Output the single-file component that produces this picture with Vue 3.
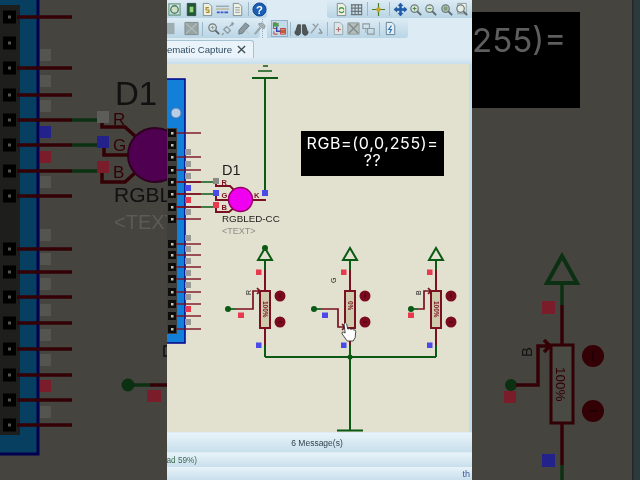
<script setup>
const P = (d, f = 'none', s = 'none', w = 1) => ({ d, f, s, w })
const ring = 'M3 7a4 4 0 1 0 8 0a4 4 0 1 0-8 0'
const doc = P('M3.5 1.5h6l3 3v10h-9z', '#eef0e4', '#7d8c90', 1)
const mag = (c, extra = []) => [P(ring, c, '#6f7d80', 1.3), P('M10 10l4 4', 'none', '#5f6a6c', 2), ...extra]
const grayTool = '#8f9ea3'

const iconsA = [
  { first: true, p: [P('M2 2h12v12h-12z', 'none', '#6f9a80', 1.2), P('M4 8a4 4 0 1 0 8 0a4 4 0 1 0-8 0', '#cfe0c8', '#4d7d5c', 1.4)] },
  { p: [P('M3.5 1.5h9v13h-9z', '#1c5a35', '#38474c', 1), P('M6 5h4v6h-4z', '#9ed07c')] },
  { p: [doc, P('M9.5 6h-3v2.5h3v2.5h-3', 'none', '#a58a22', 1.2)] },
  { p: [P('M1 4.5h14', 'none', '#8c9aa0', 1.2), P('M1 7.5h14', 'none', '#b8a070', 1), P('M2 11h3M6 11h3M10 11h4', 'none', '#3d55c8', 2)] },
  { p: [doc, P('M5.5 6h5M5.5 8.5h5M5.5 11h5', 'none', '#8c9aa0', 1)] },
  { sep: true },
  { p: [P('M1 8a7 7 0 1 0 14 0a7 7 0 1 0-14 0', '#1a5fb4', '#0f3f86', 1)], t: '?' }
]
const iconsB = [
  { p: [doc, P('M5.5 8a2.6 2.6 0 0 1 5 0M10.5 9.5a2.6 2.6 0 0 1-5 0', 'none', '#3c9a3c', 1.4)] },
  { p: [P('M2 3h12M2 6.5h12M2 10h12M2 13.5h12M3 2v12M6.5 2v12M10 2v12M13.5 2v12', 'none', '#6a7478', 1.2)] },
  { sep: true },
  { p: [P('M8 1v14M1 8h14', 'none', '#4a7d2e', 1.3), P('M5.5 8a2.5 2.5 0 1 0 5 0a2.5 2.5 0 1 0-5 0', '#c9a326')] },
  { sep: true },
  { p: [P('M8 1l2.6 3h-1.6v3h3v-1.6l3 2.6l-3 2.6v-1.6h-3v3h1.6l-2.6 3l-2.6-3h1.6v-3h-3v1.6l-3-2.6l3-2.6v1.6h3v-3h-1.6z', '#1a5db0', '#123f80', .5)] },
  { p: mag('#dbe8d8', [P('M5 7h4M7 5v4', 'none', '#4a7d4a', 1)]) },
  { p: mag('#dbe8d8', [P('M5 7h4', 'none', '#4a7d4a', 1)]) },
  { p: mag('#b8c8b8', [P('M5 5h4v4h-4z', '#7f9a7f')]) },
  { p: [P('M4 1.5h9v11h-9z', '#f4f6f0', '#8a9698', 1), ...mag('#e8eee6')] }
]
const iconsC = [
  { first: true, gray: true, p: [P('M-2 2h10v12h-10z', '#9eaeb2')] },
  { p: [P('M1 1.5h14v13h-14z', '#98a4a4', '#7f8c8e', 1), P('M2 2.5l12 11M14 2.5l-12 11', 'none', '#b4bebe', 1.2)] },
  { sep: true },
  { p: mag('#d8e2e2', [P('M5 7h4M7 5v4', 'none', grayTool, 1)]) },
  { p: [P('M3 9l3-3l4 4l-3 3zM9 6l4-4M3 13l-2 2M11 3h3M12 1v4', 'none', grayTool, 1.5)] },
  { p: [P('M2 10l7-8l4 3l-7 8l-4 1z', '#8a9aa0', '#6d7b80', 1), P('M9 10l4 4', 'none', '#c6d0d2', 2)] },
  { p: [P('M3 14l6-7', 'none', '#9aa6aa', 2.4), P('M7 3l4-1l3 3l-1 3l-3-1l-2-2z', '#a8b2b4', '#8c989c', 1)] }
]
const iconsD = [
  { p: [P('M7 5l-2.5-3h-3v6h3M9 8h5.5v6h-5.5zM2 11v3h4', 'none', '#c03a3a', 1), P('M2 2h5v4h-5z', '#4aa04a'), P('M5 6v5h6', 'none', '#3048b0', 1.5), P('M9 9h5v4h-5z', '#c85a3a')], active: true },
  { sep: true },
  { p: [P('M2 10a3 3 0 1 0 5 2v-8h-3zM9 12a3 3 0 1 0 5-2l-2-6h-3z', '#4f5658', '#3a4042', .8)] },
  { p: [P('M2 13l8-10', 'none', '#98a6a8', 1.6), P('M4 3l3 3M11 8l3 5M10 13h4', 'none', '#7f8f92', 1.3)] },
  { sep: true },
  { p: [P('M3.5 1.5h6l3 3v10h-9z', '#dce6e8', '#9aa6a8', 1), P('M5.5 9h5M8 6.5v5', 'none', '#b07070', 1.2)] },
  { p: [P('M2 2h12v12h-12z', '#b4bebc', '#8f9c9c', 1), P('M3 3l10 10M13 3l-10 10', 'none', '#7f8a8a', 1.4)] },
  { p: [P('M2 3h7v5h-7zM7 8h7v6h-7z', 'none', '#8f9c9e', 1.2), P('M5 8v4h2', 'none', '#a0acae', 1)] },
  { sep: true },
  { p: [P('M3.5 1.5h6l3 3v10h-9z', '#e6eef2', '#5f8096', 1), P('M9 5l-3 4h3l-2 4', 'none', '#2a74c0', 1.2)] }
]

const mainPins = [133, 157, 170, 182, 194, 207, 219, 244, 255, 267, 279, 292, 304, 316, 329]
const allSquares = [133, 145, 157, 170, 182, 194, 207, 219, 244, 255, 267, 279, 292, 304, 316, 329]
const mainPads = [
  [152, '#9a9a96'], [164, '#9a9a96'], [176, '#9a9a96'], [188, '#4a4ae8'], [200, '#e83a4e'], [212, '#9a9a96'],
  [238, '#9a9a96'], [249, '#9a9a96'], [261, '#9a9a96'], [273, '#9a9a96'], [285, '#9a9a96'], [297, '#9a9a96'],
  [309, '#e83a4e'], [322, '#9a9a96']
]
const pots = [
  { x: 265, text: '100%', dot: 228, tap: 253, tapY: 291, padX: 241, padC: '#e83a4e', lx: 248, ly: 292, l: 'R' },
  { x: 350, text: '0%', dot: 314, tap: 338, tapY: 327, padX: 325, padC: '#4a4ae8', lx: 333, ly: 280, l: 'G' },
  { x: 436, text: '100%', dot: 411, tap: 424, tapY: 291, padX: 411, padC: '#e83a4e', lx: 418, ly: 292, l: 'B' }
]

const leftPins = [17, 43, 68, 95, 120, 145, 171, 196, 249, 272, 297, 323, 349, 375, 400, 425]
const leftWires = [17, 68, 95, 120, 145, 171, 196, 249, 272, 297, 323, 349, 375, 400, 425]
const leftPads = [
  [55, '#55554f'], [81, '#55554f'], [106, '#55554f'], [132, '#22228a'], [157, '#7a1c2a'], [182, '#55554f'],
  [235, '#55554f'], [259, '#55554f'], [284, '#55554f'], [310, '#55554f'], [335, '#55554f'], [360, '#55554f'],
  [386, '#7a1c2a'], [412, '#55554f']
]
</script>

<template>
  <div class="screen">
    <aside class="side side-left">
      <svg class="full" viewBox="0 0 167 480">
        <rect x="-2" y="-2" width="40" height="456" class="dk-blue" />
        <rect x="0" y="5" width="20" height="430" class="dk-head" />
        <g v-for="y in leftPins" :key="'lp' + y">
          <rect x="3" :y="y - 6.5" width="13" height="13" class="blk" />
          <rect x="8" :y="y - 1.5" width="3" height="3" class="dk-hole" />
        </g>
        <path v-for="y in leftWires" :key="'lw' + y" :d="`M17 ${y}H72`" class="dk-red w3" />
        <rect v-for="p in leftPads" :key="'ld' + p[0]" x="40" :y="p[0] - 6" width="11" height="12" :fill="p[1]" />
        <path d="M72 120H97M72 145H97M72 171H97" class="dk-green w3" />
        <rect x="97" y="111" width="12" height="12" fill="#5c5c58" />
        <rect x="97" y="136" width="12" height="12" fill="#22228a" />
        <rect x="97" y="161" width="12" height="12" fill="#7a1c2a" />
        <path d="M102 123V127H125L136 137M104 148V155H128M102 173V182H125L136 172" class="dk-red w3" />
        <circle cx="155" cy="155" r="27" fill="#500050" stroke="#300020" stroke-width="2" />
        <text x="115" y="105" class="t-d1" font-size="33">D1</text>
        <text x="113" y="125" class="t-dkred" font-size="17">R</text>
        <text x="113" y="151" class="t-dkred" font-size="17">G</text>
        <text x="113" y="178" class="t-dkred" font-size="17">B</text>
        <text x="114" y="202" class="t-d1" font-size="21">RGBLED-CC</text>
        <text x="114" y="229" class="t-gray" font-size="20">&lt;TEXT&gt;</text>
        <circle cx="128" cy="385" r="6.5" fill="#0b3012" />
        <path d="M128 385H150" class="dk-green w3" />
        <path d="M150 385H167" class="dk-red w3" />
        <rect x="147" y="390" width="14" height="12" fill="#7a1c2a" />
        <rect x="164" y="346" width="6" height="10" fill="none" stroke="#111" stroke-width="1.5" />
      </svg>
    </aside>

    <main class="app">
      <div class="bar bar-one">
        <div class="group">
          <template v-for="(ic, i) in iconsA" :key="'a' + i">
            <span v-if="ic.sep" class="sep"></span>
            <svg v-else class="ic" :class="{ first: ic.first }" viewBox="0 0 16 16">
              <path v-for="(s, j) in ic.p" :key="j" :d="s.d" :fill="s.f" :stroke="s.s" :stroke-width="s.w" />
              <text v-if="ic.t" x="8" y="12.5" text-anchor="middle" class="qm">{{ ic.t }}</text>
            </svg>
          </template>
        </div>
        <div class="group group-b">
          <template v-for="(ic, i) in iconsB" :key="'b' + i">
            <span v-if="ic.sep" class="sep"></span>
            <svg v-else class="ic" viewBox="0 0 16 16">
              <path v-for="(s, j) in ic.p" :key="j" :d="s.d" :fill="s.f" :stroke="s.s" :stroke-width="s.w" />
            </svg>
          </template>
        </div>
      </div>
      <div class="bar bar-two">
        <div class="group group-c">
          <template v-for="(ic, i) in iconsC" :key="'c' + i">
            <span v-if="ic.sep" class="sep"></span>
            <svg v-else class="ic" :class="{ first: ic.first }" viewBox="0 0 16 16">
              <path v-for="(s, j) in ic.p" :key="j" :d="s.d" :fill="s.f" :stroke="s.s" :stroke-width="s.w" />
            </svg>
          </template>
        </div>
        <span class="grip"></span>
        <div class="group group-d">
          <template v-for="(ic, i) in iconsD" :key="'d' + i">
            <span v-if="ic.sep" class="sep"></span>
            <svg v-else class="ic" :class="{ active: ic.active }" viewBox="0 0 16 16">
              <path v-for="(s, j) in ic.p" :key="j" :d="s.d" :fill="s.f" :stroke="s.s" :stroke-width="s.w" />
            </svg>
          </template>
        </div>
      </div>
      <div class="tabs">
        <div class="tab">
          <span class="tab-label">Schematic Capture</span>
          <svg class="tab-x" viewBox="0 0 10 10"><path d="M1 1L9 9M9 1L1 9" /></svg>
        </div>
      </div>
      <div class="canvas">
        <svg class="full" viewBox="167 64 302 368">
          <rect x="160" y="79" width="25" height="264" class="board" />
          <circle cx="176" cy="113" r="5" fill="#b9cde6" stroke="#5a7db0" />
          <rect x="167" y="128" width="10" height="206" fill="#3f3f3b" />
          <g v-for="y in allSquares" :key="'s' + y">
            <rect x="168" :y="y - 4" width="8" height="8" fill="#0c0c0c" />
            <rect x="171" :y="y - 1" width="2.5" height="2.5" fill="#c8c4ac" />
          </g>
          <path v-for="y in mainPins" :key="'w' + y" :d="`M176 ${y}H201`" class="red w1" />
          <rect v-for="p in mainPads" :key="'p' + p[0]" x="185" :y="p[0] - 3" width="6" height="6" :fill="p[1]" />

          <path d="M201 182H213M201 194H213M201 207H213" class="green w1" />
          <path d="M176 182H201M176 194H201M176 207H201" class="red w1" />
          <rect x="213" y="178" width="6" height="6" fill="#8a8a86" />
          <rect x="213" y="190" width="6" height="6" fill="#4a4ae8" />
          <rect x="213" y="202" width="6" height="6" fill="#e83a4e" />
          <path d="M216 184V186H230L235 191M216 196V200H229M216 208V212H229L235 207M252 200H266" class="red w2" />
          <circle cx="240.5" cy="199.5" r="12" fill="#f000f0" stroke="#960060" stroke-width="1.5" />
          <path d="M265 78V190" class="green w2" />
          <path d="M252 78H278" class="green w2" />
          <path d="M258 71H272M263 66H268" class="green w15" />
          <rect x="262" y="190" width="6" height="6" fill="#4a4ae8" />
          <text x="222" y="175" class="t-sch" font-size="14.5">D1</text>
          <text x="221.5" y="184.5" class="t-red" font-size="7.5">R</text>
          <text x="221.5" y="198" class="t-red" font-size="7.5">G</text>
          <text x="221.5" y="210" class="t-red" font-size="7.5">B</text>
          <text x="254" y="198" class="t-red" font-size="7.5">K</text>
          <text x="222" y="222" class="t-sch" font-size="9.8">RGBLED-CC</text>
          <text x="222" y="234" class="t-faint" font-size="9">&lt;TEXT&gt;</text>

          <g v-for="pot in pots" :key="pot.x">
            <path :d="`M${pot.x} 248L${pot.x - 7} 260H${pot.x + 7}Z`" class="outline" />
            <circle v-if="pot.x === 265" cx="265" cy="248" r="3" fill="#0a5a14" />
            <path :d="`M${pot.x} 260V270M${pot.x} 345V357`" class="green w2" />
            <path :d="`M${pot.x} 270V290M${pot.x} 328V345`" class="red w2" />
            <rect :x="pot.x - 5" y="291" width="10" height="37" fill="#cfccae" stroke="#7a1020" stroke-width="2" />
            <text :transform="`translate(${pot.x - 2.5} 301) rotate(90)`" class="t-red" font-size="6.5">{{ pot.text }}</text>
            <circle :cx="pot.x + 15" cy="296" r="5.5" fill="#7a0a1e" />
            <circle :cx="pot.x + 15" cy="322" r="5.5" fill="#7a0a1e" />
            <path :d="`M${pot.x + 15} 293.5V298M${pot.x + 13} 322H${pot.x + 17}`" stroke="#4c0010" stroke-width="1" />
            <circle :cx="pot.dot" cy="309" r="3" fill="#0a5a14" />
            <path :d="`M${pot.dot} 309H${pot.dot + 7}`" class="green w15" />
            <path :d="`M${pot.dot + 7} 309H${pot.tap}V${pot.tapY}H${pot.tap + 7}M${pot.tap + 4} ${pot.tapY - 3}L${pot.tap + 7} ${pot.tapY}L${pot.tap + 4} ${pot.tapY + 3}`" class="red w15" />
            <rect :x="pot.x - 9" y="269.5" width="5.5" height="5.5" fill="#e83a4e" />
            <rect :x="pot.x - 9" y="342.5" width="5.5" height="5.5" fill="#4a4ae8" />
            <rect :x="pot.padX - 3" y="312.5" width="6" height="5.5" :fill="pot.padC" />
            <text :transform="`translate(${pot.lx + 3} ${pot.ly + 3}) rotate(-90)`" class="t-sch" font-size="7">{{ pot.l }}</text>
          </g>
          <path d="M265 357H436" class="green w2" />
          <circle cx="350" cy="357" r="2.5" fill="#0a5a14" />
          <path d="M350 357V430" class="green w2" />
          <path d="M337 430.5H363" class="green w2" />
          <path d="M344 324q1.3-2.5 2.7 0l1 5q2-1 3 .3q2-1 3 .7q2-.5 2 1.5l-.5 6l-2 3.5h-6l-5-7q-1-2 1-2l2 1z" fill="#fff" stroke="#222" stroke-width=".8" />
        </svg>
        <div class="note">RGB=(0,0,255)=<br />??</div>
      </div>
      <div class="status s-one">6 Message(s)</div>
      <div class="status s-two"><span class="load">(Virtual load 59%)</span></div>
      <div class="status s-three"><span class="th">th</span></div>
    </main>

    <aside class="side side-right">
      <svg class="full" viewBox="472 0 168 480">
        <rect x="472" y="12" width="108" height="96" fill="#000" />
        <text x="472" y="52" class="t-big" font-size="33">255)=</text>
        <path d="M562 256L547 283H577Z" class="dk-outline" />
        <path d="M562 283V305M562 465V480" class="dk-green w3" />
        <path d="M562 305V345M562 423V465" class="dk-red w3" />
        <rect x="551" y="345" width="22" height="78" fill="#4a4a44" stroke="#330006" stroke-width="3" />
        <text transform="translate(556 367) rotate(90)" class="t-dkred" font-size="13.5">100%</text>
        <circle cx="593" cy="356" r="11" fill="#330006" />
        <circle cx="593" cy="411" r="11" fill="#330006" />
        <path d="M593 351V361M589 411H597" stroke="#1f0006" stroke-width="2" />
        <circle cx="511" cy="385" r="6" fill="#0b3012" />
        <path d="M516 385H538V346H549M544 340L550 346L544 352" class="dk-red w3" />
        <rect x="504" y="391" width="12" height="12" fill="#7a1c2a" />
        <rect x="542" y="301" width="13" height="13" fill="#7a1c2a" />
        <rect x="542" y="454" width="13" height="13" fill="#22228a" />
        <text transform="translate(532 357) rotate(-90)" class="t-d1" font-size="15">B</text>
        <rect x="632" y="0" width="8" height="480" fill="#2d3a3c" />
        <rect x="632" y="0" width="1.5" height="480" fill="#23292a" />
      </svg>
    </aside>
  </div>
</template>

<style scoped>
.screen { display: flex; width: 640px; height: 480px; overflow: hidden; font-family: "Liberation Sans", Arial, sans-serif; filter: blur(.35px); }
.side { flex: none; background: #45443e; }
.side-left { width: 167px; }
.side-right { width: 168px; }
.full { display: block; width: 100%; height: 100%; }
.app { flex: none; width: 305px; display: flex; flex-direction: column; background: #dcebf4; overflow: hidden; }

.bar { display: flex; flex: none; align-items: stretch; }
.bar-one { height: 18px; justify-content: space-between; }
.bar-two { height: 19px; margin-top: 1px; }
.group { display: flex; align-items: center; gap: .35px; background: linear-gradient(#dcebf4, #b9d5e5); border-radius: 0 0 3px 0; }
.group-b { padding: 0 3px 0 6.5px; border-radius: 0 0 0 3px; }
.group-c { width: 93px; }
.group-d { padding: 0 10px 0 5px; margin-left: 1px; }
.grip { width: 3px; margin-left: 2px; border-left: 1px dotted #8fa9b8; }
.ic { flex: none; width: 15px; height: 15px; border: 0; overflow: hidden; }
.first { margin-right: 2px; }
.active { background: #c3dbe9; outline: 1px solid #8fb2c8; }
.sep { flex: none; width: 1px; height: 14px; margin: 0 2.5px; background: #9db9c9; }
.qm { font-size: 12px; font-weight: 700; fill: #fff; font-family: "Liberation Sans", sans-serif; }

.tabs { flex: none; height: 24px; margin-top: 2px; padding-bottom: 5px; box-sizing: border-box; background: linear-gradient(#dcebf4 75%, #c8dfec); }
.tab { width: 87px; height: 18px; display: flex; align-items: center; justify-content: flex-end; gap: 5px; padding-right: 7px; box-sizing: border-box; background: #e9f3f9; border: 1px solid #a6c3d4; border-left: 0; border-bottom: 0; border-radius: 0 3px 0 0; overflow: hidden; }
.tab-label { flex: none; font-size: 9.6px; font-weight: 400; color: #2f4a62; white-space: nowrap; }
.tab-x { flex: none; width: 9px; height: 9px; }
.tab-x path { stroke: #3f4f5a; stroke-width: 1.5; fill: none; }

.canvas { position: relative; flex: none; width: 302px; height: 368px; background: #e2e0cf; border-right: 3px solid #c3dcea; }
.note { position: absolute; left: 134px; top: 67px; width: 143px; height: 45px; background: #000; color: #fff; text-align: center; font-family: Inter, sans-serif; font-size: 16px; letter-spacing: .65px; line-height: 17px; padding-top: 4px; box-sizing: border-box; white-space: nowrap; }

.status { flex: none; display: flex; align-items: center; background: linear-gradient(#e8f3f9, #c8dfec); font-size: 8.5px; color: #33424c; overflow: hidden; }
.s-one { height: 19px; margin-top: 1px; justify-content: center; padding-right: 5px; }
.s-two { height: 14px; margin-top: 1px; justify-content: flex-end; padding-right: 275px; color: #3b6a52; white-space: nowrap; font-size: 8.2px; }
.load { flex: none; }
.s-three { flex: 1; justify-content: flex-end; padding-right: 2px; }
.th { color: #3a5a9a; font-size: 9px; }

.board { fill: #127fd8; stroke: #00008a; stroke-width: 1.5; }
.red { stroke: #7a1020; fill: none; }
.green { stroke: #0a5a14; fill: none; }
.w1 { stroke-width: 1.4; }
.w15 { stroke-width: 1.7; }
.w2 { stroke-width: 2; }
.w3 { stroke-width: 3.5; }
.outline { fill: none; stroke: #0a5a14; stroke-width: 2; }
.dk-outline { fill: none; stroke: #0b3012; stroke-width: 4; }
.dk-blue { fill: #063f60; stroke: #000050; stroke-width: 3; }
.dk-head { fill: #1e1e1c; }
.blk { fill: #000; }
.dk-hole { fill: #55554f; }
.dk-red { stroke: #330006; fill: none; }
.dk-green { stroke: #0b3012; fill: none; }
text { font-family: "Liberation Sans", Arial, sans-serif; }
.t-sch { fill: #1c1c1c; }
.t-red { fill: #7a1020; font-weight: 700; }
.t-faint { fill: #8f8f86; }
.t-d1 { fill: #111; }
.t-dkred { fill: #330006; }
.t-gray { fill: #5c5c56; }
.t-big { fill: #5e5e5e; font-family: Inter, sans-serif; }
</style>
